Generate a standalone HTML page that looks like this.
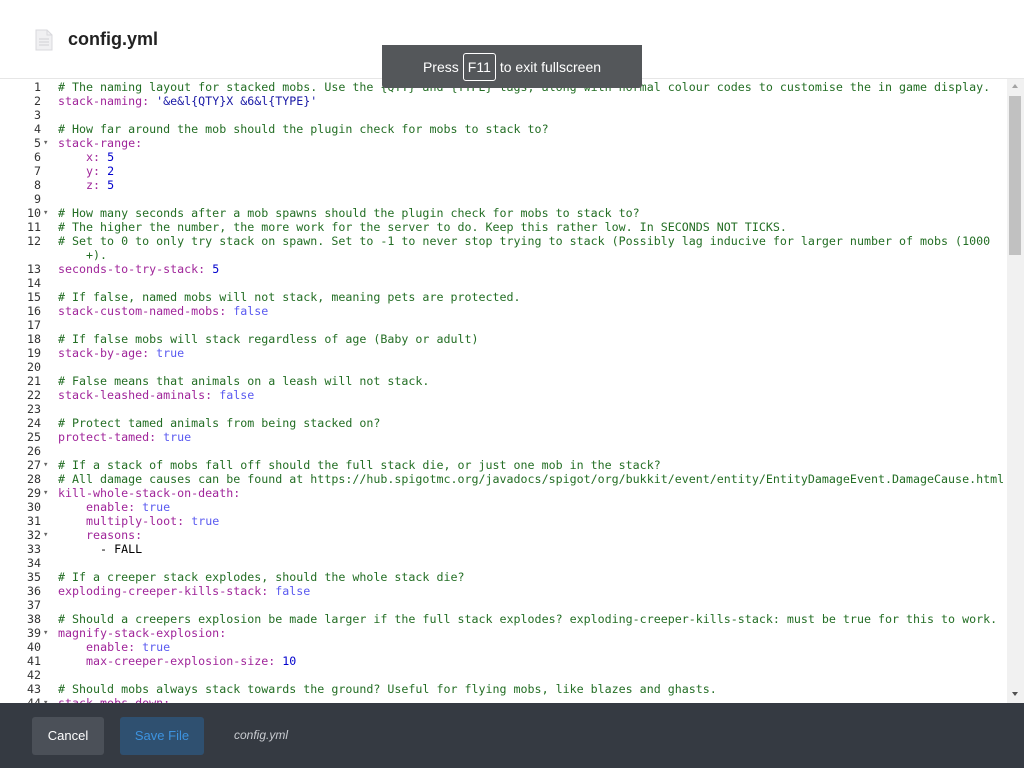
<!DOCTYPE html>
<html><head><meta charset="utf-8"><style>
*{margin:0;padding:0;box-sizing:border-box}
body{width:1024px;height:768px;overflow:hidden;background:#fff;font-family:"Liberation Sans",sans-serif;position:relative}
.hdr{position:absolute;left:0;top:0;width:1024px;height:79px;border-bottom:1px solid #e6e6e6}
.title{position:absolute;left:68px;top:29px;font-size:18px;font-weight:bold;color:#222}
.ficon{position:absolute;left:35px;top:29px}
.ed{position:absolute;left:0;top:80px;width:1007px;height:623px;overflow:hidden;font-family:"DejaVu Sans Mono",monospace;font-size:11.65px;line-height:14px}
.l{position:relative;height:14px;white-space:pre;color:#000}
.l.w{height:28px}
.n{position:absolute;left:0;width:41px;text-align:right;color:#333}
.f{position:absolute;left:43px;top:0;font-size:9px;color:#666}
.c{position:absolute;left:58px;white-space:pre}
.cm{color:#236e24}.k{color:#a0259a}.s{color:#1a1aa6}.nu{color:#0000cd}.b{color:#5a5af0}
.sb{position:absolute;left:1007px;top:79px;width:17px;height:624px;background:#f1f1f1}
.th{position:absolute;left:2px;top:17px;width:12px;height:159px;background:#c1c1c1}
.ft{position:absolute;left:0;top:703px;width:1024px;height:65px;background:#353a42}
.btn{position:absolute;top:14px;height:38px;border-radius:3px;font-size:13px;line-height:38px;text-align:center}
.fs{position:absolute;left:382px;top:45px;width:260px;height:43px;background:#54575a;border-radius:0 0 3px 3px;color:#fff;font-size:14px;text-align:center;line-height:44px}
.fs span{display:inline-block;border:1px solid #fff;border-radius:3px;padding:0 4px;line-height:26px;margin:0 4px}
</style></head><body>
<div class="hdr">
<svg class="ficon" width="18" height="22" viewBox="0 0 18 22"><path d="M1 1h11l5 5v15H1z" fill="#f0f0f2" stroke="#d8d8dc"/><path d="M12 1v5h5" fill="none" stroke="#d8d8dc"/><path d="M4 10h10M4 13h10M4 16h10" stroke="#d0d0d4"/></svg>
<div class="title">config.yml</div>
</div>
<div class="ed">
<div class="l"><span class="n">1</span><span class="c cm"># The naming layout for stacked mobs. Use the {QTY} and {TYPE} tags, along with normal colour codes to customise the in game display.</span></div>
<div class="l"><span class="n">2</span><span class="c"><span class="k">stack-naming:</span> <span class="s">'&amp;e&amp;l{QTY}X &amp;6&amp;l{TYPE}'</span></span></div>
<div class="l"><span class="n">3</span></div>
<div class="l"><span class="n">4</span><span class="c cm"># How far around the mob should the plugin check for mobs to stack to?</span></div>
<div class="l"><span class="n">5</span><span class="f">▾</span><span class="c k">stack-range:</span></div>
<div class="l"><span class="n">6</span><span class="c">    <span class="k">x:</span> <span class="nu">5</span></span></div>
<div class="l"><span class="n">7</span><span class="c">    <span class="k">y:</span> <span class="nu">2</span></span></div>
<div class="l"><span class="n">8</span><span class="c">    <span class="k">z:</span> <span class="nu">5</span></span></div>
<div class="l"><span class="n">9</span></div>
<div class="l"><span class="n">10</span><span class="f">▾</span><span class="c cm"># How many seconds after a mob spawns should the plugin check for mobs to stack to?</span></div>
<div class="l"><span class="n">11</span><span class="c cm"># The higher the number, the more work for the server to do. Keep this rather low. In SECONDS NOT TICKS.</span></div>
<div class="l w"><span class="n">12</span><span class="c cm"># Set to 0 to only try stack on spawn. Set to -1 to never stop trying to stack (Possibly lag inducive for larger number of mobs (1000
    +).</span></div>
<div class="l"><span class="n">13</span><span class="c"><span class="k">seconds-to-try-stack:</span> <span class="nu">5</span></span></div>
<div class="l"><span class="n">14</span></div>
<div class="l"><span class="n">15</span><span class="c cm"># If false, named mobs will not stack, meaning pets are protected.</span></div>
<div class="l"><span class="n">16</span><span class="c"><span class="k">stack-custom-named-mobs:</span> <span class="b">false</span></span></div>
<div class="l"><span class="n">17</span></div>
<div class="l"><span class="n">18</span><span class="c cm"># If false mobs will stack regardless of age (Baby or adult)</span></div>
<div class="l"><span class="n">19</span><span class="c"><span class="k">stack-by-age:</span> <span class="b">true</span></span></div>
<div class="l"><span class="n">20</span></div>
<div class="l"><span class="n">21</span><span class="c cm"># False means that animals on a leash will not stack.</span></div>
<div class="l"><span class="n">22</span><span class="c"><span class="k">stack-leashed-aminals:</span> <span class="b">false</span></span></div>
<div class="l"><span class="n">23</span></div>
<div class="l"><span class="n">24</span><span class="c cm"># Protect tamed animals from being stacked on?</span></div>
<div class="l"><span class="n">25</span><span class="c"><span class="k">protect-tamed:</span> <span class="b">true</span></span></div>
<div class="l"><span class="n">26</span></div>
<div class="l"><span class="n">27</span><span class="f">▾</span><span class="c cm"># If a stack of mobs fall off should the full stack die, or just one mob in the stack?</span></div>
<div class="l"><span class="n">28</span><span class="c cm"># All damage causes can be found at https://hub.spigotmc.org/javadocs/spigot/org/bukkit/event/entity/EntityDamageEvent.DamageCause.html</span></div>
<div class="l"><span class="n">29</span><span class="f">▾</span><span class="c k">kill-whole-stack-on-death:</span></div>
<div class="l"><span class="n">30</span><span class="c">    <span class="k">enable:</span> <span class="b">true</span></span></div>
<div class="l"><span class="n">31</span><span class="c">    <span class="k">multiply-loot:</span> <span class="b">true</span></span></div>
<div class="l"><span class="n">32</span><span class="f">▾</span><span class="c">    <span class="k">reasons:</span></span></div>
<div class="l"><span class="n">33</span><span class="c">      - FALL</span></div>
<div class="l"><span class="n">34</span></div>
<div class="l"><span class="n">35</span><span class="c cm"># If a creeper stack explodes, should the whole stack die?</span></div>
<div class="l"><span class="n">36</span><span class="c"><span class="k">exploding-creeper-kills-stack:</span> <span class="b">false</span></span></div>
<div class="l"><span class="n">37</span></div>
<div class="l"><span class="n">38</span><span class="c cm"># Should a creepers explosion be made larger if the full stack explodes? exploding-creeper-kills-stack: must be true for this to work.</span></div>
<div class="l"><span class="n">39</span><span class="f">▾</span><span class="c k">magnify-stack-explosion:</span></div>
<div class="l"><span class="n">40</span><span class="c">    <span class="k">enable:</span> <span class="b">true</span></span></div>
<div class="l"><span class="n">41</span><span class="c">    <span class="k">max-creeper-explosion-size:</span> <span class="nu">10</span></span></div>
<div class="l"><span class="n">42</span></div>
<div class="l"><span class="n">43</span><span class="c cm"># Should mobs always stack towards the ground? Useful for flying mobs, like blazes and ghasts.</span></div>
<div class="l"><span class="n">44</span><span class="f">▾</span><span class="c k">stack-mobs-down:</span></div>
</div>
<div class="sb"><div style="position:absolute;left:5px;top:5px;width:0;height:0;border:3px solid transparent;border-bottom:4px solid #a3a3a3;border-top:0"></div><div class="th"></div><div style="position:absolute;left:5px;top:613px;width:0;height:0;border:3px solid transparent;border-top:4px solid #505050;border-bottom:0"></div></div>
<div class="ft">
<div class="btn" style="left:32px;width:72px;background:#4b5058;color:#fff">Cancel</div>
<div class="btn" style="left:120px;width:84px;background:#2f5070;color:#3d93e0">Save File</div>
<div style="position:absolute;left:234px;top:25px;font-size:12px;font-style:italic;color:#c8cbd0">config.yml</div>
</div>
<div class="fs">Press<span>F11</span>to exit fullscreen</div>
</body></html>
